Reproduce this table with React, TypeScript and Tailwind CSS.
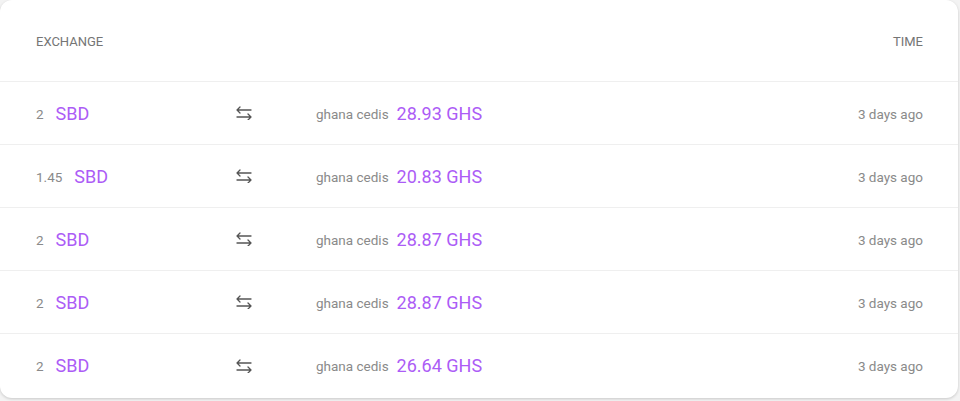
import React from "react";

const rows = [
  { amount: "2", from: "SBD", to: "28.93 GHS", time: "3 days ago" },
  { amount: "1.45", from: "SBD", to: "20.83 GHS", time: "3 days ago" },
  { amount: "2", from: "SBD", to: "28.87 GHS", time: "3 days ago" },
  { amount: "2", from: "SBD", to: "28.87 GHS", time: "3 days ago" },
  { amount: "2", from: "SBD", to: "26.64 GHS", time: "3 days ago" },
];

function SwapIcon() {
  return (
    <svg width="18" height="14" viewBox="0 0 18 14" fill="none" stroke="#555" strokeWidth="1.3" strokeLinecap="round" strokeLinejoin="round">
      <path d="M2 4h14M5 1L2 4l3 3" />
      <path d="M16 11H2M13 8l3 3-3 3" />
    </svg>
  );
}

export default function App() {
  return (
    <div className="h-[401px] w-[960px] bg-[#f3f3f3] font-['Roboto',sans-serif]">
      <div className="h-[398px] w-[958px] overflow-hidden rounded-xl bg-white shadow-[0_1px_3px_rgba(0,0,0,0.18)]">
        <div className="flex h-[82px] items-center border-b border-[#efefef] pl-[36px] pr-[35px] pt-[2px] text-[13px] text-[#757575]">
          <div className="flex-1">EXCHANGE</div>
          <div>TIME</div>
        </div>
        {rows.map((r, i) => (
          <div
            key={i}
            className={`flex h-[63px] items-center pl-[36px] pr-[35px] ${i < rows.length - 1 ? "border-b border-[#efefef]" : ""}`}
          >
            <div className="flex w-[199px] items-center gap-3">
              <span className="pt-[2px] text-[13.5px] text-[#8a8a8a]">{r.amount}</span>
              <span className="text-[18px] text-[#ac5cf6]">{r.from}</span>
            </div>
            <div className="flex w-[81px] items-center">
              <SwapIcon />
            </div>
            <div className="flex flex-1 items-center gap-2">
              <span className="pt-[2px] text-[13.5px] text-[#8a8a8a]">ghana cedis</span>
              <span className="text-[18px] text-[#ac5cf6]">{r.to}</span>
            </div>
            <div className="pt-[2px] text-[13.5px] text-[#8a8a8a]">{r.time}</div>
          </div>
        ))}
      </div>
    </div>
  );
}
